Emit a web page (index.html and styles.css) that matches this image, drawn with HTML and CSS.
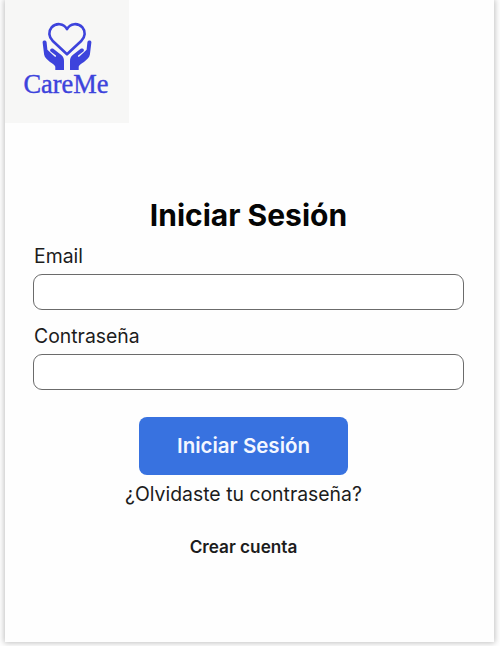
FILE: index.html
```html
<!DOCTYPE html>
<html lang="es">
<head>
<meta charset="utf-8">
<title>CareMe</title>
<link rel="stylesheet" href="styles.css">
</head>
<body>
<main class="card">
  <header class="brand">
    <svg class="brand-icon" viewBox="0 0 50 50" width="50" height="50" aria-hidden="true">
      <path class="heart" d="M25 32.3 L10.8 19 C6.6 15 6.2 9.4 9.6 5.4 C14 .6 21.8 1.1 25 7.2 C28.2 1.1 36 .6 40.4 5.4 C43.8 9.4 43.4 15 39.2 19 Z"/>
      <path class="hand" d="M.6 20.3 C.6 17.8 4.4 17.8 4.6 20.3 L5.4 27.8 L12.6 34.5 C13.7 35.3 14.4 34.6 13.9 33.6 L8.6 29.6 C7.1 27.8 9.1 25.7 11.3 26.8 L19.3 33 C21.3 34.6 22 36.6 22 39 V48 H13.3 V44.8 C13.3 42.2 3 38.5 2.1 32.5 Z"/>
      <path class="hand" d="M49.4 20.3 C49.4 17.8 45.6 17.8 45.4 20.3 L44.6 27.8 L37.4 34.5 C36.3 35.3 35.6 34.6 36.1 33.6 L41.4 29.6 C42.9 27.8 40.9 25.7 38.7 26.8 L30.7 33 C28.7 34.6 28 36.6 28 39 V48 H36.7 V44.8 C36.7 42.2 47 38.5 47.9 32.5 Z"/>
    </svg>
    <span class="brand-name">CareMe</span>
  </header>
  <form class="login">
    <h1 class="title">Iniciar Sesión</h1>
    <label class="label" for="email">Email</label>
    <input class="field" id="email" type="email">
    <label class="label label-password" for="password">Contraseña</label>
    <input class="field" id="password" type="password">
    <div class="actions">
      <button class="submit" type="button">Iniciar Sesión</button>
      <a class="forgot">¿Olvidaste tu contraseña?</a>
      <a class="create">Crear cuenta</a>
    </div>
  </form>
</main>
</body>
</html>
```
FILE: styles.css
```css
* { box-sizing: border-box; }

body {
  margin: 0;
  height: 646px;
  overflow: hidden;
  padding: 0 6px 4px 5px;
  background: #fff;
  color: #1c1c1c;
  font-family: Inter, "Liberation Sans", sans-serif;
}

.card {
  height: 642px;
  background: #fefefe;
  box-shadow: 0 0 6px 1px rgba(0, 0, 0, 0.25);
}

.brand {
  display: flex;
  flex-direction: column;
  align-items: center;
  width: 124px;
  height: 123px;
  padding-top: 22px;
  background: #f7f7f6;
  color: #3d43dc;
}

.brand-icon {
  display: block;
  margin-right: 1px;
}

.heart {
  fill: none;
  stroke: currentColor;
  stroke-width: 2.6;
  stroke-linejoin: round;
}

.hand { fill: currentColor; }

.brand-name {
  margin: -2px 2px 0 0;
  font-family: "Liberation Serif", serif;
  font-size: 26.4px;
  line-height: 28px;
  -webkit-text-stroke: 0.4px currentColor;
}

.login {
  display: flex;
  flex-direction: column;
  padding: 74px 30px 0 28px;
}

.title {
  margin: 0;
  align-self: center;
  font-size: 30px;
  line-height: 36px;
  font-weight: 700;
  color: #050505;
}

.label {
  margin: 11px 0 0 1px;
  font-size: 19.4px;
  line-height: 24px;
}

.label-password { margin-top: 14px; }

.field {
  height: 36px;
  margin: 6px 0 0;
  padding: 0 12px;
  border: 1px solid #6b6b6b;
  border-radius: 9px;
  background: #fff;
  font: inherit;
}

.actions {
  display: flex;
  flex-direction: column;
  align-items: center;
  margin-right: 10px;
}

.submit {
  width: 209px;
  height: 58px;
  margin-top: 27px;
  padding: 0;
  border: 0;
  border-radius: 8px;
  background: #3872e0;
  color: #f4f7ff;
  font: 600 20.5px/24px Inter, "Liberation Sans", sans-serif;
}

.forgot {
  margin-top: 7px;
  font-size: 19.4px;
  line-height: 24px;
}

.create {
  margin-top: 30px;
  font-size: 17.2px;
  line-height: 22px;
  font-weight: 600;
}
```
